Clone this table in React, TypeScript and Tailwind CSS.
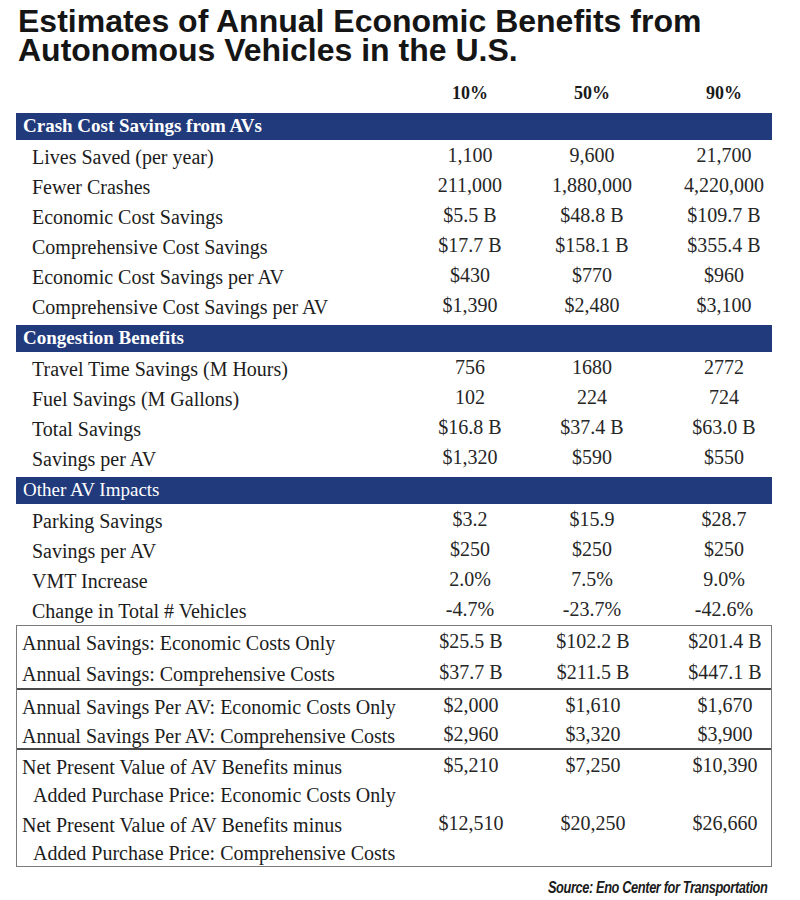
import React from 'react'

type Row = { label: string; sub?: string; v: [string, string, string] }

const sections: { title: string; bold: boolean; rows: Row[] }[] = [
  {
    title: 'Crash Cost Savings from AVs',
    bold: true,
    rows: [
      { label: 'Lives Saved (per year)', v: ['1,100', '9,600', '21,700'] },
      { label: 'Fewer Crashes', v: ['211,000', '1,880,000', '4,220,000'] },
      { label: 'Economic Cost Savings', v: ['$5.5 B', '$48.8 B', '$109.7 B'] },
      { label: 'Comprehensive Cost Savings', v: ['$17.7 B', '$158.1 B', '$355.4 B'] },
      { label: 'Economic Cost Savings per AV', v: ['$430', '$770', '$960'] },
      { label: 'Comprehensive Cost Savings per AV', v: ['$1,390', '$2,480', '$3,100'] },
    ],
  },
  {
    title: 'Congestion Benefits',
    bold: true,
    rows: [
      { label: 'Travel Time Savings (M Hours)', v: ['756', '1680', '2772'] },
      { label: 'Fuel Savings (M Gallons)', v: ['102', '224', '724'] },
      { label: 'Total Savings', v: ['$16.8 B', '$37.4 B', '$63.0 B'] },
      { label: 'Savings per AV', v: ['$1,320', '$590', '$550'] },
    ],
  },
  {
    title: 'Other AV Impacts',
    bold: false,
    rows: [
      { label: 'Parking Savings', v: ['$3.2', '$15.9', '$28.7'] },
      { label: 'Savings per AV', v: ['$250', '$250', '$250'] },
      { label: 'VMT Increase', v: ['2.0%', '7.5%', '9.0%'] },
      { label: 'Change in Total # Vehicles', v: ['-4.7%', '-23.7%', '-42.6%'] },
    ],
  },
]

const totals: Row[] = [
  { label: 'Annual Savings: Economic Costs Only', v: ['$25.5 B', '$102.2 B', '$201.4 B'] },
  { label: 'Annual Savings: Comprehensive Costs', v: ['$37.7 B', '$211.5 B', '$447.1 B'] },
]

const perAv: Row[] = [
  { label: 'Annual Savings Per AV: Economic Costs Only', v: ['$2,000', '$1,610', '$1,670'] },
  { label: 'Annual Savings Per AV: Comprehensive Costs', v: ['$2,960', '$3,320', '$3,900'] },
]

const npv: Row[] = [
  {
    label: 'Net Present Value of AV Benefits minus',
    sub: 'Added Purchase Price: Economic Costs Only',
    v: ['$5,210', '$7,250', '$10,390'],
  },
  {
    label: 'Net Present Value of AV Benefits minus',
    sub: 'Added Purchase Price: Comprehensive Costs',
    v: ['$12,510', '$20,250', '$26,660'],
  },
]

const cols = 'grid grid-cols-[416px_76px_168px_96px]'

function DataRow({ row, h, indent }: { row: Row; h: string; indent: string }) {
  return (
    <>
      <div className={`${cols} ${h}`}>
        <div className={`flex items-center pt-[2px] ${indent} text-[#1c1c1c] whitespace-nowrap`}>{row.label}</div>
        {row.v.map((x, i) => (
          <div key={i} className="flex items-center justify-center pb-[2px] text-[#262626] whitespace-nowrap">
            {x}
          </div>
        ))}
      </div>
      {row.sub && (
        <div className={`flex items-center pt-[2px] ${h} pl-[16px] text-[#1c1c1c] whitespace-nowrap`}>{row.sub}</div>
      )}
    </>
  )
}

export default function App() {
  return (
    <div className="w-[800px] h-[900px] bg-white overflow-hidden">
      <h1 className="pl-[18px] pt-[7px] font-['Liberation_Sans',Arial,sans-serif] font-bold text-[32px] tracking-normal text-[#151515]">
        <div className="h-[29px] leading-[29px] whitespace-nowrap">Estimates of Annual Economic Benefits from</div>
        <div className="h-[29px] leading-[29px] whitespace-nowrap">Autonomous Vehicles in the U.S.</div>
      </h1>

      <div className="ml-4 w-[756px] font-['Liberation_Serif','Times_New_Roman',serif] text-[20px]">
        <div className={`${cols} mt-[15px] h-[26px] text-[18px] font-bold text-[#1a1a1a]`}>
          <div />
          <div className="flex items-center justify-center">10%</div>
          <div className="flex items-center justify-center">50%</div>
          <div className="flex items-center justify-center">90%</div>
        </div>

        {sections.map((s, si) => (
          <div key={s.title} className={si === 0 ? 'mt-[7px]' : 'mt-[5px]'}>
            <div
              className={`h-[27px] bg-[#213a7c] text-white text-[19px] pl-[7px] flex items-center ${
                s.bold ? 'font-bold' : 'font-normal'
              }`}
            >
              {s.title}
            </div>
            {s.rows.map((r) => (
              <DataRow key={r.label} row={r} h="h-[30px]" indent="pl-[16px]" />
            ))}
          </div>
        ))}

        <div className="mt-[1px] border border-[#7a7a7a]">
          <div className="border-b-2 border-[#4a4a4a]">
            {totals.map((r) => (
              <DataRow key={r.label} row={r} h="h-[31px]" indent="pl-[5px]" />
            ))}
          </div>
          <div className="border-b-2 border-[#4a4a4a]">
            {perAv.map((r) => (
              <DataRow key={r.label} row={r} h="h-[29px]" indent="pl-[5px]" />
            ))}
          </div>
          <div>
            {npv.map((r) => (
              <DataRow key={r.sub} row={r} h="h-[29px]" indent="pl-[5px]" />
            ))}
          </div>
        </div>
      </div>

      <div className="mt-[12px] pr-[33px] flex justify-end">
        <span className="inline-block origin-right scale-x-[0.8] font-['Liberation_Sans',Arial,sans-serif] italic font-semibold text-[16px] leading-[18px] tracking-[-0.03em] text-[#1a1a1a] whitespace-nowrap">
          Source: Eno Center for Transportation
        </span>
      </div>
    </div>
  )
}
